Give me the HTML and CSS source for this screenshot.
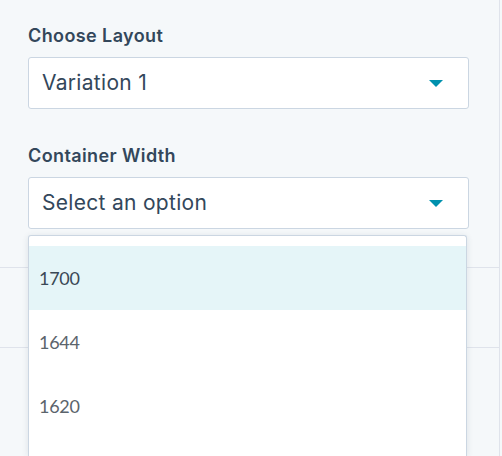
FILE: index.html
```html
<!DOCTYPE html>
<html>
<head>
<meta charset="utf-8">
<link rel="stylesheet" href="styles.css">
</head>
<body>
<div class="panel">
  <div class="fields">
    <div class="field">
      <div class="label">Choose Layout</div>
      <div class="select"><span class="value">Variation 1</span><span class="caret"></span></div>
    </div>
    <div class="field">
      <div class="label">Container Width</div>
      <div class="select"><span class="value">Select an option</span><span class="caret"></span></div>
    </div>
  </div>
  <div class="rule rule-a"></div>
  <div class="rule rule-b"></div>
  <div class="menu">
    <div class="option active">1700</div>
    <div class="option">1644</div>
    <div class="option">1620</div>
  </div>
</div>
</body>
</html>
```
FILE: styles.css
```css
html, body {
  margin: 0;
  padding: 0;
  height: 100%;
  overflow: hidden;
}
body {
  background: #f5f8fa;
  font-family: Lato, "Liberation Sans", sans-serif;
  color: #33475b;
}
.panel {
  position: relative;
  width: 499px;
  height: 456px;
  overflow: hidden;
  border-right: 1px solid #dfe3eb;
  background: #f5f8fa;
}
.fields {
  padding: 25px 0 0 28px;
  width: 441px;
  display: flex;
  flex-direction: column;
  gap: 36px;
}
.field {
  display: flex;
  flex-direction: column;
  gap: 11px;
}
.label {
  font-family: Inter, "Open Sans", sans-serif;
  font-size: 18px;
  font-weight: 600;
  line-height: 21px;
  color: #33475b;
  letter-spacing: 0.4px;
}
.select {
  height: 50px;
  border: 1px solid #cbd6e2;
  border-radius: 3px;
  background: #ffffff;
  display: flex;
  align-items: center;
  justify-content: space-between;
  padding: 0 25px 0 13px;
}
.value {
  font-family: Inter, "Open Sans", sans-serif;
  font-size: 21px;
  line-height: 26px;
  color: #33475b;
  letter-spacing: 0.3px;
}
.caret {
  width: 0;
  height: 0;
  border-left: 7px solid transparent;
  border-right: 7px solid transparent;
  border-top: 7px solid #0091ae;
  margin-top: 1px;
}
.rule {
  height: 1px;
  background: #dfe3eb;
}
.rule-a {
  margin-top: 38px;
}
.rule-b {
  margin-top: 79px;
}
.menu {
  position: absolute;
  left: 28px;
  top: 235px;
  bottom: 0;
  width: 437px;
  background: #ffffff;
  border: 1px solid #cbd6e2;
  border-bottom: none;
  border-radius: 3px 3px 0 0;
  padding-top: 10px;
  box-shadow: 0 1px 6px rgba(45, 62, 80, 0.12);
}
.option {
  height: 64px;
  display: flex;
  align-items: center;
  padding-left: 10px;
  font-size: 18px;
  letter-spacing: -0.3px;
  color: #5b646c;
}
.option.active {
  background: #e5f5f8;
  color: #3a4856;
}
```
